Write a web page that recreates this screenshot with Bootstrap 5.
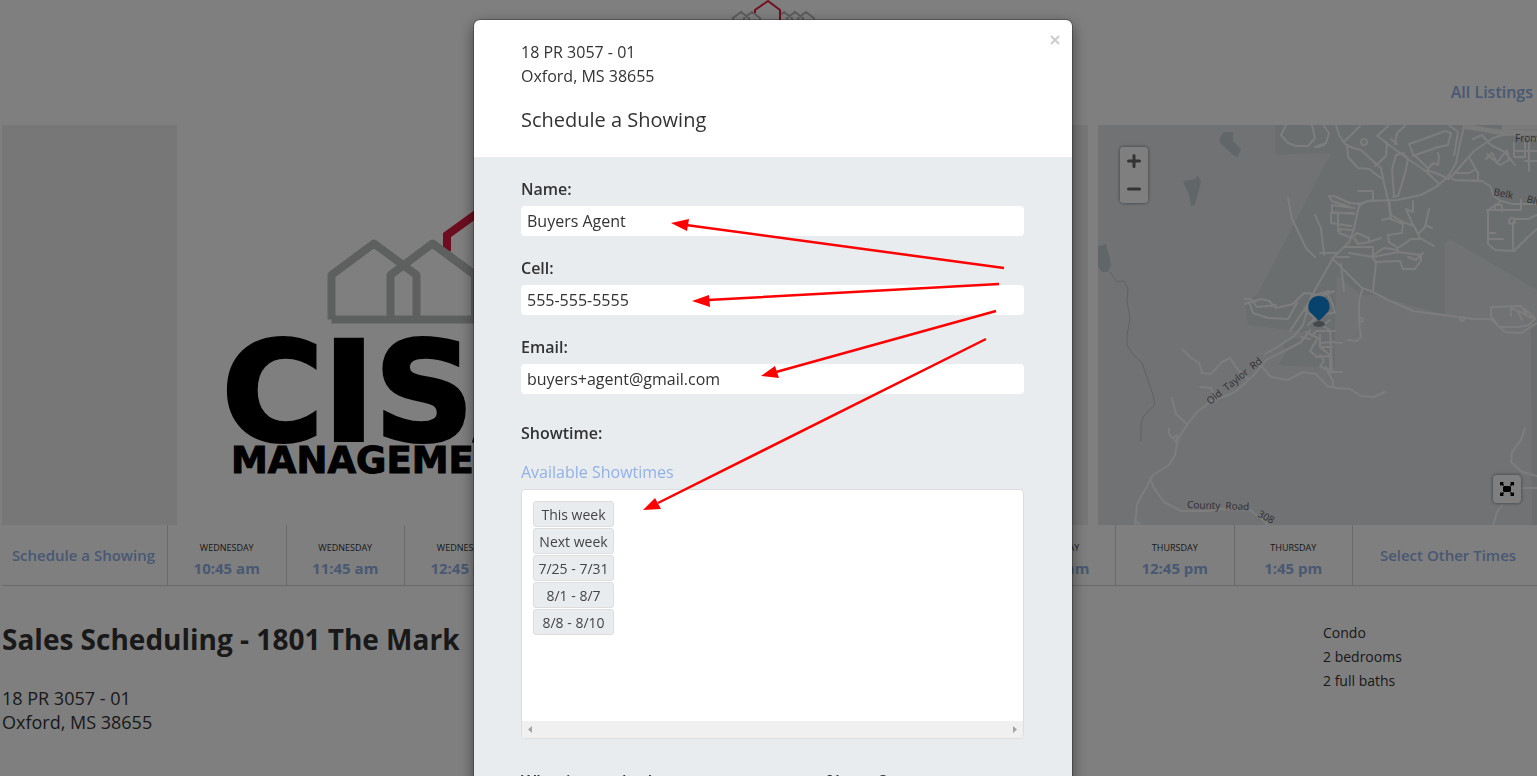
<!DOCTYPE html>
<html lang="en">
<head>
<meta charset="utf-8">
<meta name="viewport" content="width=device-width, initial-scale=1">
<title>Schedule a Showing</title>
<link href="https://cdn.jsdelivr.net/npm/bootstrap@5.3.0/dist/css/bootstrap.min.css" rel="stylesheet">
<style>
  body { font-family: "Open Sans", "Noto Sans", sans-serif; font-size: 16px; line-height: 24px; color: #333; overflow: hidden; height: 100vh; background: #fff; }
  a { color: #92b1e6; text-decoration: none; }
  .masthead { height: 125px; position: relative; }
  .masthead .crest { position: absolute; left: 50%; top: 0; margin-left: -40px; }
  .masthead a { padding: 0 4px 21px 0; font-weight: 600; }
  .media-row { height: 400px; margin-left: 2px; gap: 10px; }
  .gallery { flex: 1 1 0; min-width: 0; display: grid; grid-template-columns: 175px 1fr 175px; }
  .gallery .side { background: #eee; }
  .gallery svg { width: 100%; height: 400px; }
  .map-pane { width: 439px; position: relative; overflow: hidden; }
  .map-pane > svg { width: 100%; height: 100%; display: block; }
  .map-btns { position: absolute; left: 22px; top: 22px; width: 28px; background: #fff; border-radius: 4px; box-shadow: 0 0 3px 1px #9aa5ac; }
  .map-btns button, .expand-btn { border: 0; background: #fff; padding: 0; width: 28px; height: 28px; display: flex; align-items: center; justify-content: center; border-radius: 4px; }
  .expand-btn { position: absolute; right: 16px; bottom: 22px; box-shadow: 0 0 3px 1px #9aa5ac; }
  .times { margin-left: 2px; height: 61px; border-bottom: 1px solid #d4d4d4; font-size: 15px; font-weight: 600; }
  .times > * { display: flex; flex-direction: column; align-items: center; justify-content: center; }
  .times .ends { flex: none; width: 165px; padding-right: 2px; }
  .times .ends.last-cell { width: 185px; padding: 0 0 0 6px; }
  .times .slot { flex: 1 1 0; border-left: 1px solid #d4d4d4; line-height: 20px; font-weight: 700; padding-top: 5px; }
  .times .slot + .ends { border-left: 1px solid #d4d4d4; }
  .times .slot small { font-size: 9px; font-weight: 400; color: #333; }
  .listing { padding: 33px 2px 0; }
  .listing h1 { font-size: 28px; font-weight: 700; line-height: 40px; margin: 0 0 27px; }
  .listing address { font-size: 18px; font-weight: 500; line-height: 24px; margin: 0; }
  .facts { width: 212px; font-size: 14px; padding-top: 2px; margin: 0; }
  .modal-backdrop { opacity: .5; }
  .modal { overflow: hidden; padding-left: 9px; }
  .modal-dialog { max-width: 598px; margin: 20px auto; }
  .modal-content { border: 0; border-radius: 6px; box-shadow: 0 0 0 1px rgba(0,0,0,.25), 0 5px 15px rgba(0,0,0,.5); color: #333; overflow: hidden; }
  .modal-header { display: block; padding: 20px 48px 24px 47px; border: 0; }
  .modal-header h2 { font-size: 20px; font-weight: 400; line-height: 24px; margin: 20px 0 1px; }
  .x-btn { position: absolute; right: 11px; top: 8px; border: 0; background: none; padding: 0; width: 12px; height: 24px; display: flex; align-items: center; justify-content: center; }
  .modal-body { background: #e8ecef; padding: 20px 48px 20px 47px; }
  .form-label { font-weight: 600; display: block; margin: 0 0 5px; line-height: 24px; }
  .field { margin-bottom: 20px; }
  .field .form-control { border: 0; border-radius: 4px; height: 30px; padding: 0 6px; line-height: 30px; color: #333; }
  .showtime { margin: 27px 0 15px; line-height: 24px; font-weight: 600; }
  .picker { margin: 5px 0 30px; height: 250px; background: #fff; border: 1px solid #ddd; border-radius: 4px; display: flex; flex-direction: column; overflow: hidden; }
  .weeks { flex: 1; padding: 11px; display: flex; flex-direction: column; align-items: flex-start; gap: 1px; }
  .weeks button { width: 81px; height: 26px; font-size: 14px; line-height: 22px; padding: 2px 0 0; background: #e8ecef; border: 1px solid #ddd; border-radius: 3px; color: #444; }
  .hbar { height: 17px; background: #f0f0f0; padding: 0 6px; display: flex; align-items: center; justify-content: space-between; }
  .arrows { position: absolute; left: 0; top: 0; pointer-events: none; }
  .maplabel { font-family: "Open Sans", sans-serif; font-size: 10px; fill: #5c5c5c; }
</style>
</head>
<body>
<header class="masthead d-flex justify-content-end align-items-end">
  <svg class="crest" width="86" height="40" viewBox="0 0 86 40" fill="none" stroke="#b9b9b9" stroke-width="2">
    <path d="M4 34V18L12 12L20 18V34M15 34V18L23 12L31 18V34M51 15L55 12L63 18V34M58 34V18L66 12L74 18V34M69 34V18L77 12L86 19V34"/>
    <path d="M26 13V10L39 1L51 10V34" stroke="#e5213f"/>
  </svg>
  <a href="#">All Listings</a>
</header>

<section class="media-row d-flex">
  <div class="gallery">
    <div class="side"></div>
    <svg viewBox="177 125 736 400" preserveAspectRatio="xMinYMin slice" role="img" aria-label="CISA Management">
      <g fill="none" stroke="#bdbfbf" stroke-width="8" stroke-linejoin="round">
        <path d="M331.500 319.500V275L374 243.500L416.500 275V319.500M390.500 319.500V275L432.500 243.500L475 275V319.500M331.500 319.500H700"/>
      </g>
      <path d="M447 251V235L512 188L577 235V320" fill="none" stroke="#d81b40" stroke-width="8"/>
      <path d="M432.500 243.500L475 275" fill="none" stroke="#bdbfbf" stroke-width="8"/>
      <text x="222" y="440" font-family="DejaVu Sans" font-weight="700" font-size="138" stroke="#000" stroke-width="4">CISA</text>
      <text x="231" y="473" font-family="DejaVu Sans" font-weight="700" font-size="37" stroke="#000" stroke-width="1">MANAGEMENT</text>
    </svg>
    <div class="side"></div>
  </div>

  <div class="map-pane">
    <svg viewBox="0 0 439 400" preserveAspectRatio="xMidYMid slice" role="img" aria-label="Map">
      <rect width="439" height="400" fill="#e3e5e8"/>
      <path d="M177 0V30L222 28V49L160 168L147 179L150 200L212 208L184 218L188 228L180 240L237 243V206L239 150L262 170L275 170L347 190V119L352 114L439 165V0Z" fill="#d6dcde"/>
      <path d="M222 29H233L212 66V29ZM347 119L352 114L439 168V196H347Z" fill="#e3e5e8"/>
      <path d="M433 196H439V400H434Z" fill="#d6dcde"/>
      <g fill="#c3cfd2">
        <path d="M122 12L126 7H135V16L143 24L140 32L136 31L122 18ZM85 56L97 54L100 50L103 57L100 69L97 80L93 81L91 70L86 59ZM0 121L8 119L11 130L13 140L10 147H4L0 142Z"/>
      </g>
      <path d="M12 147L19 157L26 156L30 164L29 176L32 194L29 210V220L34 228L44 238L49 252L54 267L56 274L57 279L45 292L43 300V316" fill="none" stroke="#bcc6ca" stroke-width="1"/>
      <g fill="none" stroke="#fafafb" stroke-width="2" stroke-linejoin="round" stroke-linecap="round">
        <!-- northern streets -->
        <path d="M188 0L183 10L190 18L198 21H210L217 13L214 0M220 22L226 20M217 22L228 18L231 8L226 1"/>
        <path d="M238 0L241 10L247 19L255 23L263 25L275 36L283 43L286 58L290 75L293 94L305 99M247 16L262 1M249 20L250 32L260 43L271 44L283 53M277 41L288 31L289 18L279 11L290 1M287 17L310 34L329 47L341 59M307 1L299 8L297 19M293 14L299 19M329 42L315 29L311 19L323 15L347 6L353 8L350 20L340 22L315 31M296 71L294 44L298 30L305 28L310 34L307 49L300 71L295 72M329 45L335 38L340 40L341 32L340 28M329 45L340 49L351 54"/>
        <circle cx="266" cy="17" r="3"/><circle cx="414" cy="96" r="3"/><circle cx="364" cy="194" r="2"/><circle cx="263" cy="195" r="2"/>
        <path d="M366 1L362 18L358 38L350 52L338 62L323 70L299 75L269 76L261 81L255 107L251 117L235 133L213 172L205 200L196 211L181 221L167 229M352 1L360 7L356 30M350 50L356 55L384 56L392 61L396 71L403 76M354 51L376 26L395 13L405 10L439 8M357 48H371L376 45M372 34L380 48V55M375 14L384 10L393 20L407 27L417 40M388 34L394 28L399 38L409 25L411 35L402 40L397 36L389 29M416 10L439 14M416 18V32H427V18M417 26H439M431 14V46M427 36H439"/>
        <path d="M291 76L293 90L305 97L316 101L322 113L336 121M315 76V87L308 84L315 100M331 84L327 102L320 109M327 100L334 103M305 99L304 108L290 110L291 117L300 123L313 114L322 114M284 95L292 93M260 66H275V75L260 79M262 79L252 78L236 71H231L234 76L252 82M256 83L234 80V88H256M256 89L233 87V98L253 101M254 105L242 104L241 108L254 113L259 108L271 113V117L283 113M257 114L260 119L271 117M240 90V106M247 122H275L275 131M251 128L275 132L300 127L323 130V135L317 144H305L302 136L278 137L274 131L286 123L300 125M310 132L318 135L325 128M239 132H251M222 128H240M234 133L245 144L264 163L275 167L290 175L315 186L353 191L375 194H393M275 133L278 138L275 166M264 165L261 176V197L263 212L259 216L250 215M246 166L243 139M190 73L194 94L208 123L217 132M217 90L223 103L226 130M403 76L390 85V119L397 125L416 126L429 113L439 104M389 85H423V75M418 94H430L439 90M397 85V80H404V86M390 114H405M390 108H397M415 97V126M403 76L415 79H439"/>
        <!-- centre -->
        <path d="M147 179L163 174L171 176L178 183L195 179L206 168L217 169M147 174H153L159 182L178 180M151 177L155 188L170 193L190 194L199 178M192 206L215 171L231 166M210 200L216 194L230 188M208 207L220 213L212 226L219 232L233 231M222 210V222L232 230V248L228 242M214 211L218 206H237M216 196L232 205L234 247H244M222 218L234 217L244 218M220 190L235 188M224 201L232 195M224 171L236 166M213 178L207 186L216 192M229 168L234 178L237 188M203 212L212 214M222 222H234M222 230L226 236L222 241L228 244"/>
        <path d="M393 191V182L423 181L430 191L437 194L431 200L421 202H401L393 191M413 191V183L420 186L424 195M393 194L407 207L423 208L439 198M421 186L431 192M427 184L437 193"/>
        <!-- southern roads -->
        <path d="M212 205L203 217L190 224L168 235L156 250L137 267L112 277L99 287L89 300L80 314L77 330L71 340L55 350L44 370L39 380L37 400M85 225L92 232L101 238L104 248L113 249L124 237L132 233L140 245L149 253M102 262L113 263L117 274M74 273L78 289L90 300M71 304V309L79 318M75 313L79 310V314M52 353L56 363L66 377L83 386L110 386L125 384L152 385L164 394L170 400M160 237L173 252L190 255L205 247L218 249L229 261L238 263L252 264L263 271L275 272L287 267M229 246L235 256V262M427 303L423 315L414 327L413 337L424 347L439 351M416 363H439M405 379L399 387L395 400M37 395L42 400"/>
      </g>
      <path d="M365 1L400 7L439 8M404 2H439" fill="none" stroke="#f7f7f8" stroke-width="5"/>
      <g class="maplabel">
        <text x="417" y="17">Front</text>
        <text transform="translate(395 70) rotate(12)">Belk</text>
        <text transform="translate(428 77) rotate(16)">Blvd</text>
        <text transform="translate(112 280) rotate(-39)">Old&#160; Taylor&#160; Rd</text>
        <text transform="translate(89 383) rotate(2)">County&#160; Road</text>
        <text transform="translate(159 391) rotate(28)">308</text>
      </g>
      <ellipse cx="221" cy="199" rx="6" ry="3" fill="#8e9193"/>
      <path d="M221 196L213 188C208 184 210 171 221 171C232 171 234 184 229 188Z" fill="#1087dd"/>
    </svg>
    <div class="map-btns">
      <button type="button" aria-label="Zoom in"><svg width="14" height="14" stroke="#666" stroke-width="3" stroke-linecap="round"><path d="M7 1.500V12.500M1.500 7H12.500"/></svg></button>
      <button type="button" aria-label="Zoom out"><svg width="14" height="14" stroke="#666" stroke-width="3" stroke-linecap="round"><path d="M1.500 7H12.500"/></svg></button>
    </div>
    <button class="expand-btn" type="button" aria-label="Full screen"><svg width="14" height="14"><path d="M3 5L4 4H10L11 5V9L10 10H4L3 9ZM0 0H4L3 1L4 3L3 4L1 3L0 4ZM14 0H10L11 1L10 3L11 4L13 3L14 4ZM0 14H4L3 13L4 11L3 10L1 11L0 10ZM14 14H10L11 13L10 11L11 10L13 11L14 10Z"/></svg></button>
  </div>
</section>

<nav class="times d-flex">
  <a class="ends" href="#">Schedule a Showing</a>
  <a class="slot" href="#"><small>WEDNESDAY</small>10:45 am</a>
  <a class="slot" href="#"><small>WEDNESDAY</small>11:45 am</a>
  <a class="slot" href="#"><small>WEDNESDAY</small>12:45 pm</a>
  <a class="slot" href="#"><small>WEDNESDAY</small>1:45 pm</a>
  <a class="slot" href="#"><small>WEDNESDAY</small>2:45 pm</a>
  <a class="slot" href="#"><small>WEDNESDAY</small>3:45 pm</a>
  <a class="slot" href="#"><small>THURSDAY</small>10:45 am</a>
  <a class="slot" href="#"><small>THURSDAY</small>11:45 am</a>
  <a class="slot" href="#"><small>THURSDAY</small>12:45 pm</a>
  <a class="slot" href="#"><small>THURSDAY</small>1:45 pm</a>
  <a class="ends last-cell" href="#">Select Other Times</a>
</nav>

<main class="listing d-flex justify-content-between">
  <div>
    <h1>Sales Scheduling - 1801 The Mark</h1>
    <address>18 PR 3057 - 01<br>Oxford, MS 38655</address>
  </div>
  <ul class="facts list-unstyled">
    <li>Condo</li>
    <li>2 bedrooms</li>
    <li>2 full baths</li>
  </ul>
</main>

<div class="modal-backdrop"></div>
<div class="modal d-block" tabindex="-1" role="dialog" aria-modal="true" aria-labelledby="dlgTitle">
  <div class="modal-dialog">
    <div class="modal-content">
      <div class="modal-header">
        <div>18 PR 3057 - 01</div>
        <div>Oxford, MS 38655</div>
        <h2 id="dlgTitle">Schedule a Showing</h2>
        <button class="x-btn" type="button" aria-label="Close"><svg width="10" height="10" stroke="#ccc" stroke-width="2"><path d="M1 1L9 9M9 1L1 9"/></svg></button>
      </div>
      <form class="modal-body">
        <div class="field"><label class="form-label" for="nm">Name:</label><input class="form-control" id="nm" type="text" value="Buyers Agent"></div>
        <div class="field"><label class="form-label" for="cell">Cell:</label><input class="form-control" id="cell" type="tel" value="555-555-5555"></div>
        <div class="field"><label class="form-label" for="em">Email:</label><input class="form-control" id="em" type="email" value="buyers+agent@gmail.com"></div>
        <div class="showtime">Showtime:</div>
        <a href="#">Available Showtimes</a>
        <div class="picker">
          <div class="weeks">
            <button type="button">This week</button>
            <button type="button">Next week</button>
            <button type="button">7/25 - 7/31</button>
            <button type="button">8/1 - 8/7</button>
            <button type="button">8/8 - 8/10</button>
          </div>
          <div class="hbar">
            <svg width="4" height="7" fill="#a3a3a3"><path d="M4 0V7L0 3.500Z"/></svg>
            <svg width="4" height="7" fill="#a3a3a3"><path d="M0 0V7L4 3.500Z"/></svg>
          </div>
        </div>
        <div class="field"><label class="form-label" for="bg">What is your budget or a current area of home?</label><input class="form-control" id="bg" type="text"></div>
      </form>
      <svg class="arrows" width="598" height="520" viewBox="474 20 598 520" stroke="#f00" stroke-width="2.500" fill="#f00">
        <path d="M1004 268L686 225M999 284L708 300M996 311L776 372M986 339L658 503" fill="none"/>
        <path d="M671 223L689 219L687 231ZM692 301L709 295L710 307ZM761 376L775 366L779 378ZM643 510L655 498L661 509Z" stroke="none"/>
      </svg>
    </div>
  </div>
</div>
<script src="https://cdn.jsdelivr.net/npm/bootstrap@5.3.0/dist/js/bootstrap.bundle.min.js"></script>
</body>
</html>
